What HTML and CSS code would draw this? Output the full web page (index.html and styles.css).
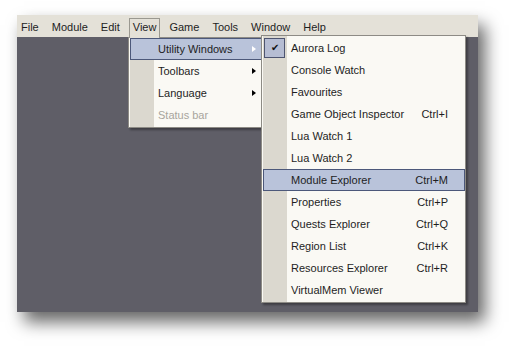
FILE: index.html
```html
<!DOCTYPE html>
<html>
<head>
    <title>Toolset - View menu</title>
    <meta charset="UTF-8">
    <link rel="stylesheet" href="styles.css">
</head>
<body>
    <div class="window">
        <div class="menubar">
            <span class="menubar-item">File</span>
            <span class="menubar-item">Module</span>
            <span class="menubar-item">Edit</span>
            <span class="menubar-item open">View</span>
            <span class="menubar-item">Game</span>
            <span class="menubar-item">Tools</span>
            <span class="menubar-item">Window</span>
            <span class="menubar-item">Help</span>
        </div>
        <div class="workspace"></div>

        <div class="dropdown view-menu">
            <div class="item active"><span class="label">Utility Windows</span><span class="arrow"></span></div>
            <div class="item"><span class="label">Toolbars</span><span class="arrow"></span></div>
            <div class="item"><span class="label">Language</span><span class="arrow"></span></div>
            <div class="item disabled"><span class="label">Status bar</span></div>
        </div>

        <div class="dropdown utility-menu">
            <div class="item"><span class="check">&#10004;</span><span class="label">Aurora Log</span></div>
            <div class="item"><span class="label">Console Watch</span></div>
            <div class="item"><span class="label">Favourites</span></div>
            <div class="item"><span class="label">Game Object Inspector</span><span class="shortcut">Ctrl+I</span></div>
            <div class="item"><span class="label">Lua Watch 1</span></div>
            <div class="item"><span class="label">Lua Watch 2</span></div>
            <div class="item active"><span class="label">Module Explorer</span><span class="shortcut">Ctrl+M</span></div>
            <div class="item"><span class="label">Properties</span><span class="shortcut">Ctrl+P</span></div>
            <div class="item"><span class="label">Quests Explorer</span><span class="shortcut">Ctrl+Q</span></div>
            <div class="item"><span class="label">Region List</span><span class="shortcut">Ctrl+K</span></div>
            <div class="item"><span class="label">Resources Explorer</span><span class="shortcut">Ctrl+R</span></div>
            <div class="item"><span class="label">VirtualMem Viewer</span></div>
        </div>
    </div>
</body>
</html>
```
FILE: styles.css
```css
body {
    margin: 0;
    height: 347px;
    background: #ffffff;
    font-family: "Liberation Sans", Arial, sans-serif;
    font-size: 11px;
    color: #1e1e1e;
}
.window {
    position: relative;
    margin: 15px 0 0 17px;
    width: 461px;
    height: 297px;
    display: flex;
    flex-direction: column;
    box-shadow: 7px 10px 16px rgba(0, 0, 0, 0.6);
}
.menubar {
    height: 22px;
    background: #e4e1d8;
    display: flex;
    align-items: flex-end;
}
.menubar-item {
    padding: 2px 3px 4px;
    margin-right: 5px;
    border: 1px solid transparent;
    border-bottom: none;
}
.menubar-item.open {
    border-color: #9a9890;
    background: #e4e1d8;
    position: relative;
    z-index: 2;
    margin-bottom: -1px;
    padding-bottom: 5px;
}
.workspace {
    flex: 1;
    background: #5f5e67;
}
.dropdown {
    position: absolute;
    background: #faf9f4;
    border: 1px solid #8d8b85;
    box-shadow: 2px 2px 2px rgba(0, 0, 0, 0.35);
    z-index: 1;
}
.dropdown::before {
    content: "";
    position: absolute;
    left: 1px;
    top: 0;
    bottom: 0;
    width: 24px;
    background: #dbd8cf;
}
.view-menu {
    left: 111px;
    top: 22px;
    width: 133px;
    padding: 0 0 1px 1px;
}
.utility-menu {
    left: 244px;
    top: 20px;
    width: 202px;
    padding: 1px 0 1px 1px;
}
.item {
    position: relative;
    height: 22px;
    display: flex;
    align-items: center;
    padding: 0 16px 0 27px;
    border: 1px solid transparent;
    box-sizing: border-box;
}
.item .label {
    flex: 1;
}
.item.active {
    background: #b9c3da;
    border-color: #4c587a;
}
.item.disabled {
    color: #a8a59d;
}
.arrow {
    position: absolute;
    right: 6px;
    top: 7px;
    width: 0;
    height: 0;
    border-top: 3.5px solid transparent;
    border-bottom: 3.5px solid transparent;
    border-left: 4px solid #000000;
}
.active .arrow {
    border-left-color: #ffffff;
}
.shortcut {
    text-align: right;
}
.check {
    position: absolute;
    left: 0;
    top: 0;
    width: 19px;
    height: 18px;
    background: #b6bdd3;
    border: 1px solid #4d5470;
    font-size: 10px;
    line-height: 18px;
    text-align: center;
    color: #111111;
}
```
